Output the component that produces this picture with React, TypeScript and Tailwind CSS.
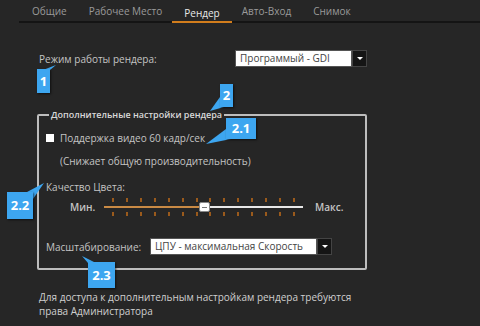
import React from "react";

const tabs = ["Общие", "Рабочее Место", "Рендер", "Авто-Вход", "Снимок"];

function Select({ value, width }: { value: string; width: string }) {
  return (
    <div className="flex h-[17px] items-stretch">
      <div className={`${width} bg-white border border-[#555] px-[4px] text-[10px] leading-[15px] text-[#444] whitespace-nowrap overflow-hidden`}>
        {value}
      </div>
      <div className="w-[15px] bg-[#151515] border border-[#444] flex items-center justify-center">
        <div className="w-0 h-0 border-l-[3px] border-r-[3px] border-t-[3px] border-l-transparent border-r-transparent border-t-white" />
      </div>
    </div>
  );
}

function Badge({ label, className }: { label: string; className: string }) {
  return (
    <div
      className={`absolute bg-[#3da6f0] text-white font-bold text-[13px] leading-none flex items-center justify-center shadow-[1px_1px_2px_rgba(0,0,0,0.6)] ${className}`}
    >
      {label}
    </div>
  );
}

function Ticks({ pos }: { pos: string }) {
  return (
    <div className={`absolute left-[8px] right-[8px] ${pos} flex justify-between`}>
      {Array.from({ length: 14 }).map((_, i) => (
        <div key={i} className="w-[2px] h-[4px] bg-[#9a5a1c]" />
      ))}
    </div>
  );
}

export default function App() {
  return (
    <div className="relative w-[480px] h-[326px] overflow-hidden bg-[#262626] text-[#c4c4c4] text-[10px] leading-[14px] font-['Open_Sans',sans-serif]">
      {/* tabs */}
      <div className="ml-[19px] pl-[2px] flex border-b-2 border-[#141414] h-[23px] items-end">
        {tabs.map((t) => (
          <div
            key={t}
            className={
              t === "Рендер"
                ? "px-[12px] pb-[1px] -mb-[2px] -mx-[1px] border-b-2 border-[#d27d1c] text-[#e8e8e8]"
                : "px-[11px] pb-[3px] text-[#9a9a9a]"
            }
          >
            {t}
          </div>
        ))}
      </div>

      <div className="pl-[37px] pr-[113px]">
        <div className="mt-[27px] flex items-center justify-between pl-[2px]">
          <span>Режим работы рендера:</span>
          <Select value="Программый - GDI" width="w-[117px]" />
        </div>

        <fieldset className="mt-[42px] h-[161px] border-2 border-[#bdbdbd] rounded-[2px] pl-[7px] pr-[10px] pt-0 min-w-0">
          <legend className="ml-[3px] px-[2px] text-[9px] font-semibold text-[#d8d8d8] leading-[12px]">
            Дополнительные настройки рендера
          </legend>
          <div className="mt-[10px] flex items-center gap-[6px]">
            <div className="w-[8px] h-[8px] bg-white" />
            <span>Поддержка видео 60 кадр/сек</span>
          </div>
          <div className="mt-[9px] pl-[14px]">(Снижает общую производительность)</div>
          <div className="mt-[12px]">Качество Цвета:</div>
          <div className="mt-[2px] flex items-center pl-[24px]">
            <span className="w-[34px] font-semibold">Мин.</span>
            <div className="relative w-[199px] h-[22px]">
              <Ticks pos="top-[2px]" />
              <Ticks pos="bottom-[2px]" />
              <div className="absolute left-0 top-[10px] w-[97px] h-[2px] bg-[#c98a45]" />
              <div className="absolute left-[104px] right-0 top-[10px] h-[2px] bg-[#e8e8e8]" />
              <div className="absolute left-[95px] top-[6px] w-[11px] h-[10px] rounded-[2px] bg-white border border-[#888] flex items-center justify-center">
                <div className="w-[5px] h-[1px] bg-[#777]" />
              </div>
            </div>
            <span className="ml-[12px] font-semibold">Макс.</span>
          </div>
          <div className="mt-[20px] flex items-center">
            <span className="w-[104px]">Масштабирование:</span>
            <Select value="ЦПУ - максимальная Скорость" width="w-[167px]" />
          </div>
        </fieldset>

        <div className="mt-[20px] pl-[2px] text-[#cfcfcf]">
          Для доступа к дополнительным настройкам рендера требуются
          <br />
          права Администратора
        </div>
      </div>

      {/* callout tails */}
      <svg className="absolute left-0 top-0 pointer-events-none" width="480" height="326">
        <g fill="#3da6f0">
          <polygon points="43,70 50,70 56,65" />
          <polygon points="220,97 224,107 210,111" />
          <polygon points="226,129 231,139 206,144" />
          <polygon points="27,192 33,199 44,183" />
          <polygon points="88,263 96,263 82,256" />
        </g>
      </svg>

      <Badge label="1" className="left-[37px] top-[69px] w-[13px] h-[24px]" />
      <Badge label="2" className="left-[220px] top-[84px] w-[13px] h-[23px]" />
      <Badge label="2.1" className="left-[226px] top-[118px] w-[30px] h-[21px]" />
      <Badge label="2.2" className="left-[7px] top-[192px] w-[26px] h-[27px]" />
      <Badge label="2.3" className="left-[88px] top-[262px] w-[27px] h-[26px]" />
    </div>
  );
}
